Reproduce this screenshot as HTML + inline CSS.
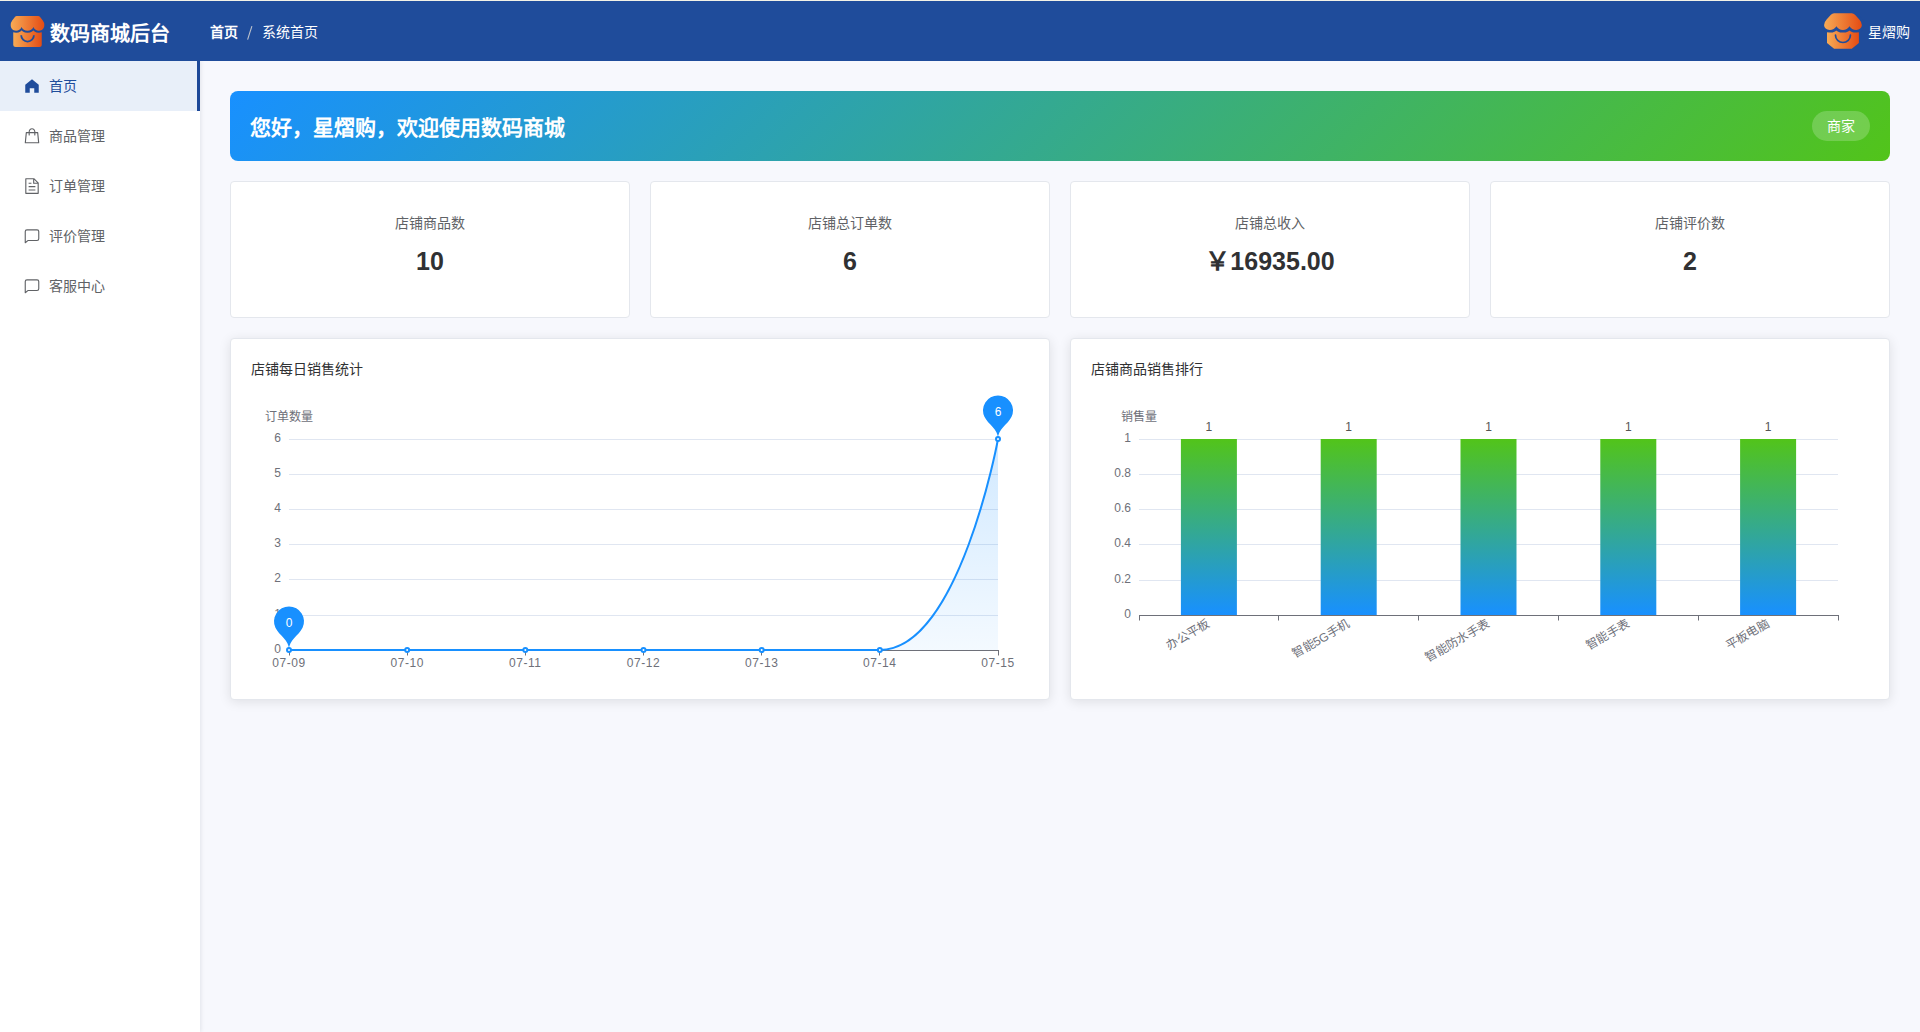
<!DOCTYPE html>
<html lang="zh-CN">
<head>
<meta charset="utf-8">
<style>
*{box-sizing:border-box;margin:0;padding:0}
html,body{width:1920px;height:1032px;overflow:hidden;background:#f7f8fd;font-family:"Liberation Sans",sans-serif}
.abs{position:absolute}
#topline{left:0;top:0;width:1920px;height:1px;background:#f3f2e6}
#header{left:0;top:1px;width:1920px;height:60px;background:#1f4c9b}
.title{left:50px;top:21px;font-size:20px;font-weight:bold;color:#fff;line-height:26px;white-space:nowrap}
.bc1{left:210px;top:22px;font-size:14px;font-weight:bold;color:#fff;line-height:20px}
.bc2{left:262px;top:22px;font-size:14px;color:#fff;line-height:20px}
.uname{left:1868px;top:22px;font-size:14px;color:#fff;line-height:20px}
#side{left:0;top:61px;width:200px;height:971px;background:#fff;box-shadow:1px 0 4px rgba(0,21,41,0.09)}
.mi{left:0;width:200px;height:50px}
.mi .tx{position:absolute;left:49px;top:15px;font-size:14px;line-height:20px;color:#606266;white-space:nowrap}
.mi.act{background:#e8eff9}
.mi.act .tx{color:#1f4c9b}
.actbar{left:197px;top:61px;width:3px;height:50px;background:#1d4898}
#banner{left:230px;top:91px;width:1660px;height:70px;border-radius:8px;background:linear-gradient(135deg,#1890ff 0%,#52c41a 100%)}
.btext{left:250px;top:114px;font-size:21px;font-weight:bold;color:#fff;line-height:28px;white-space:nowrap}
.tag{left:1812px;top:111px;width:58px;height:30px;border-radius:15px;background:rgba(255,255,255,0.2);color:#fff;font-size:14px;line-height:30px;text-align:center}
.card{top:181px;width:400px;height:137px;background:#fff;border:1px solid #e4e7ed;border-radius:4px}
.card .lb{position:absolute;left:0;right:0;top:30.5px;text-align:center;font-size:14px;line-height:20px;color:#606266}
.card .vl{position:absolute;left:0;right:0;top:63px;text-align:center;font-size:25px;font-weight:bold;line-height:32px;color:#303133}
.ccard{top:338px;width:820px;height:362px;background:#fff;border:1px solid #e4e7ed;border-radius:4px;box-shadow:0 2px 12px rgba(0,0,0,0.1)}
.ctitle{font-size:14px;line-height:20px;color:#303133;white-space:nowrap}
svg text{font-family:"Liberation Sans",sans-serif}
</style>
</head>
<body>
<div id="side" class="abs"></div>
<div id="topline" class="abs"></div>
<div id="header" class="abs"></div>

<svg class="abs" style="left:0;top:0" width="60" height="61" viewBox="0 0 60 61">
<defs><linearGradient id="lg1" x1="0" y1="0" x2="1" y2="0"><stop offset="0" stop-color="#f7ab55"/><stop offset="1" stop-color="#e44c14"/></linearGradient></defs>
<g id="logo">
<rect x="13.25" y="28.5" width="28.5" height="18.4" rx="2.5" fill="url(#lg1)"/>
<path d="M16.9,16.0 H38.1 Q39.4,16.0 40.1,17.0 L42.8,20.6 Q44.3,22.6 44.3,25.1 C44.3,28.3 42.4,30.8 38.9,30.8 C36.5,30.8 34.6,29.6 33.4,27.0 C32.2,29.6 30.3,30.8 27.5,30.8 C24.7,30.8 22.8,29.6 21.6,27.0 C20.4,29.6 18.5,30.8 16.1,30.8 C12.6,30.8 10.7,28.3 10.7,25.1 Q10.7,22.6 12.2,20.6 L14.9,17.0 Q15.6,16.0 16.9,16.0 Z" fill="url(#lg1)" stroke="#1f4c9b" stroke-width="4.0" paint-order="stroke"/>
<path d="M21.2,35.2 A6.35,6.35 0 0 0 33.9,35.2" fill="none" stroke="#1f4c9b" stroke-width="1.8"/>
</g>
</svg>
<div class="abs title">数码商城后台</div>
<div class="abs bc1">首页</div>
<svg class="abs" style="left:240px;top:20px" width="20" height="25" viewBox="240 20 20 25"><line x1="247.6" y1="39.6" x2="251.9" y2="26.2" stroke="#c0c4cc" stroke-width="1.1"/></svg>
<div class="abs bc2">系统首页</div>

<svg class="abs" style="left:1810px;top:0" width="60" height="61" viewBox="1810 0 60 61">
<defs><linearGradient id="lg2" x1="0" y1="0" x2="1" y2="0"><stop offset="0" stop-color="#f7ab55"/><stop offset="1" stop-color="#e44c14"/></linearGradient></defs>
<path d="M1827,27 H1858.9 V42.9 L1851.8,48.7 H1834.1 L1827,42.9 Z" fill="url(#lg2)"/>
<path d="M1834.1,13.3 H1851.8 Q1853.6,13.3 1855.0,14.8 L1859.3,19.6 Q1861.8,22.3 1861.8,25.1 C1861.8,28.0 1859.4,29.9 1856.2,29.9 C1853.2,29.9 1850.9,28.7 1849.5,26.3 C1848.1,28.7 1845.8,29.9 1842.95,29.9 C1840.1,29.9 1837.8,28.7 1836.4,26.3 C1835.0,28.7 1832.7,29.9 1829.7,29.9 C1826.5,29.9 1824.1,28.0 1824.1,25.1 Q1824.1,22.3 1826.6,19.6 L1830.9,14.8 Q1832.3,13.3 1834.1,13.3 Z" fill="url(#lg2)" stroke="#1f4c9b" stroke-width="5.4" paint-order="stroke"/>
<path d="M1835.5,35.2 A7.45,7.3 0 0 0 1850.4,35.2" fill="none" stroke="#1f4c9b" stroke-width="1.7" stroke-linecap="round"/>
</svg>
<div class="abs uname">星熠购</div>

<div class="abs mi act" style="top:61px;width:197px">
 <div class="tx">首页</div>
</div>
<div class="abs actbar"></div>
<div class="abs mi" style="top:111px">
 <div class="tx">商品管理</div>
</div>
<div class="abs mi" style="top:161px">
 <div class="tx">订单管理</div>
</div>
<div class="abs mi" style="top:211px">
 <div class="tx">评价管理</div>
</div>
<div class="abs mi" style="top:261px">
 <div class="tx">客服中心</div>
</div>

<svg class="abs" style="left:0;top:0" width="200" height="300" viewBox="0 0 200 300">
<g transform="translate(23,77) scale(0.017578125)"><path fill="#1f4c9b" d="M512 128 128 447.936V896h255.936V640H640v256h255.936V447.936z"/></g>
<g transform="translate(23,127) scale(0.017578125)"><path fill="#606266" d="M320 288v-22.336C320 154.688 405.504 64 512 64s192 90.688 192 201.664v22.4h131.072a32 32 0 0 1 31.808 28.8l57.6 576a32 32 0 0 1-31.808 35.2H131.328a32 32 0 0 1-31.808-35.2l57.6-576a32 32 0 0 1 31.808-28.8H320zm64 0h256v-22.336C640 189.248 582.272 128 512 128c-70.272 0-128 61.248-128 137.664v22.4zm-64 64H217.92l-51.2 512h690.560l-51.264-512H704v96a32 32 0 1 1-64 0v-96H384v96a32 32 0 0 1-64 0z"/></g>
<g transform="translate(23,177) scale(0.017578125)"><path fill="#606266" d="M832 384H576V128H192v768h640zm-26.496-64L640 154.496V320zM160 64h480l256 256v608a32 32 0 0 1-32 32H160a32 32 0 0 1-32-32V96a32 32 0 0 1 32-32m160 448h384v64H320zm0-192h160v64H320zm0 384h384v64H320z"/></g>
<g transform="translate(23,227) scale(0.017578125)"><path fill="#606266" d="M273.536 736H800a64 64 0 0 0 64-64V256a64 64 0 0 0-64-64H224a64 64 0 0 0-64 64v570.88zM296 800 147.968 918.4A32 32 0 0 1 96 893.44V256a128 128 0 0 1 128-128h576a128 128 0 0 1 128 128v416a128 128 0 0 1-128 128z"/></g>
<g transform="translate(23,277) scale(0.017578125)"><path fill="#606266" d="M273.536 736H800a64 64 0 0 0 64-64V256a64 64 0 0 0-64-64H224a64 64 0 0 0-64 64v570.88zM296 800 147.968 918.4A32 32 0 0 1 96 893.44V256a128 128 0 0 1 128-128h576a128 128 0 0 1 128 128v416a128 128 0 0 1-128 128z"/></g>
</svg>
<div id="banner" class="abs"></div>
<div class="abs btext">您好，星熠购，欢迎使用数码商城</div>
<div class="abs tag">商家</div>

<div class="abs card" style="left:230px"><div class="lb">店铺商品数</div><div class="vl">10</div></div>
<div class="abs card" style="left:650px"><div class="lb">店铺总订单数</div><div class="vl">6</div></div>
<div class="abs card" style="left:1070px"><div class="lb">店铺总收入</div><div class="vl">￥16935.00</div></div>
<div class="abs card" style="left:1490px"><div class="lb">店铺评价数</div><div class="vl">2</div></div>

<div class="abs ccard" style="left:230px"></div>
<div class="abs ccard" style="left:1070px"></div>
<div class="abs ctitle" style="left:251px;top:359px">店铺每日销售统计</div>
<div class="abs ctitle" style="left:1091px;top:359px">店铺商品销售排行</div>

<!--CHART-->
<svg class="abs" style="left:0;top:0" width="1920" height="1032" viewBox="0 0 1920 1032">
<line x1="289.0" y1="439.5" x2="998.0" y2="439.5" stroke="#e0e6f1" stroke-width="1"/>
<line x1="289.0" y1="474.5" x2="998.0" y2="474.5" stroke="#e0e6f1" stroke-width="1"/>
<line x1="289.0" y1="509.5" x2="998.0" y2="509.5" stroke="#e0e6f1" stroke-width="1"/>
<line x1="289.0" y1="544.5" x2="998.0" y2="544.5" stroke="#e0e6f1" stroke-width="1"/>
<line x1="289.0" y1="579.5" x2="998.0" y2="579.5" stroke="#e0e6f1" stroke-width="1"/>
<line x1="289.0" y1="615.5" x2="998.0" y2="615.5" stroke="#e0e6f1" stroke-width="1"/>
<text x="281" y="441.7" text-anchor="end" font-size="12" fill="#6e7079">6</text>
<text x="281" y="476.9" text-anchor="end" font-size="12" fill="#6e7079">5</text>
<text x="281" y="512.0" text-anchor="end" font-size="12" fill="#6e7079">4</text>
<text x="281" y="547.2" text-anchor="end" font-size="12" fill="#6e7079">3</text>
<text x="281" y="582.4" text-anchor="end" font-size="12" fill="#6e7079">2</text>
<text x="281" y="617.5" text-anchor="end" font-size="12" fill="#6e7079">1</text>
<text x="281" y="652.7" text-anchor="end" font-size="12" fill="#6e7079">0</text>
<text x="289" y="421" text-anchor="middle" font-size="12" fill="#6e7079">订单数量</text>
<defs><linearGradient id="ag" x1="0" y1="0" x2="0" y2="1"><stop offset="0" stop-color="#1890ff" stop-opacity="0.2"/><stop offset="1" stop-color="#1890ff" stop-opacity="0.05"/></linearGradient><linearGradient id="bg" x1="0" y1="0" x2="0" y2="1"><stop offset="0" stop-color="#52c41a"/><stop offset="1" stop-color="#1890ff"/></linearGradient></defs>
<path d="M879.83,650.00 C959.21,650.00 998.00,439.00 998.00,439.00 L998.00,650.0 Z" fill="url(#ag)"/>
<line x1="289.0" y1="650.5" x2="998.5" y2="650.5" stroke="#6e7079" stroke-width="1"/>
<line x1="289.5" y1="650" x2="289.5" y2="655.5" stroke="#6e7079" stroke-width="1"/>
<line x1="407.5" y1="650" x2="407.5" y2="655.5" stroke="#6e7079" stroke-width="1"/>
<line x1="525.5" y1="650" x2="525.5" y2="655.5" stroke="#6e7079" stroke-width="1"/>
<line x1="643.5" y1="650" x2="643.5" y2="655.5" stroke="#6e7079" stroke-width="1"/>
<line x1="761.5" y1="650" x2="761.5" y2="655.5" stroke="#6e7079" stroke-width="1"/>
<line x1="879.5" y1="650" x2="879.5" y2="655.5" stroke="#6e7079" stroke-width="1"/>
<line x1="998.5" y1="650" x2="998.5" y2="655.5" stroke="#6e7079" stroke-width="1"/>
<text x="289.0" y="667" text-anchor="middle" font-size="12" letter-spacing="0.55" fill="#6e7079">07-09</text>
<text x="407.2" y="667" text-anchor="middle" font-size="12" letter-spacing="0.55" fill="#6e7079">07-10</text>
<text x="525.3" y="667" text-anchor="middle" font-size="12" letter-spacing="0.55" fill="#6e7079">07-11</text>
<text x="643.5" y="667" text-anchor="middle" font-size="12" letter-spacing="0.55" fill="#6e7079">07-12</text>
<text x="761.7" y="667" text-anchor="middle" font-size="12" letter-spacing="0.55" fill="#6e7079">07-13</text>
<text x="879.8" y="667" text-anchor="middle" font-size="12" letter-spacing="0.55" fill="#6e7079">07-14</text>
<text x="998.0" y="667" text-anchor="middle" font-size="12" letter-spacing="0.55" fill="#6e7079">07-15</text>
<path d="M289.00,650.00 L879.83,650.00 C959.21,650.00 998.00,439.00 998.00,439.00" fill="none" stroke="#1890ff" stroke-width="2" stroke-linejoin="bevel"/>
<circle cx="289.00" cy="650.00" r="2" fill="#fff" stroke="#1890ff" stroke-width="2"/>
<circle cx="407.17" cy="650.00" r="2" fill="#fff" stroke="#1890ff" stroke-width="2"/>
<circle cx="525.33" cy="650.00" r="2" fill="#fff" stroke="#1890ff" stroke-width="2"/>
<circle cx="643.50" cy="650.00" r="2" fill="#fff" stroke="#1890ff" stroke-width="2"/>
<circle cx="761.67" cy="650.00" r="2" fill="#fff" stroke="#1890ff" stroke-width="2"/>
<circle cx="879.83" cy="650.00" r="2" fill="#fff" stroke="#1890ff" stroke-width="2"/>
<circle cx="998.00" cy="439.00" r="2" fill="#fff" stroke="#1890ff" stroke-width="2"/>
<path d="M275.447,627.857 A15,15 0 1 1 302.553,627.857 C298.695,635.989 289.000,639.500 289.000,650.000 C289.000,639.500 279.305,635.989 275.447,627.857Z" fill="#1890ff"/>
<text x="289.0" y="627.3" text-anchor="middle" font-size="12" fill="#fff">0</text>
<path d="M984.447,416.857 A15,15 0 1 1 1011.553,416.857 C1007.695,424.989 998.000,428.500 998.000,439.000 C998.000,428.500 988.305,424.989 984.447,416.857Z" fill="#1890ff"/>
<text x="998.0" y="416.3" text-anchor="middle" font-size="12" fill="#fff">6</text>
<line x1="1139.0" y1="439.5" x2="1838.0" y2="439.5" stroke="#e0e6f1" stroke-width="1"/>
<line x1="1139.0" y1="474.5" x2="1838.0" y2="474.5" stroke="#e0e6f1" stroke-width="1"/>
<line x1="1139.0" y1="509.5" x2="1838.0" y2="509.5" stroke="#e0e6f1" stroke-width="1"/>
<line x1="1139.0" y1="544.5" x2="1838.0" y2="544.5" stroke="#e0e6f1" stroke-width="1"/>
<line x1="1139.0" y1="580.5" x2="1838.0" y2="580.5" stroke="#e0e6f1" stroke-width="1"/>
<text x="1131" y="441.7" text-anchor="end" font-size="12" fill="#6e7079">1</text>
<text x="1131" y="476.9" text-anchor="end" font-size="12" fill="#6e7079">0.8</text>
<text x="1131" y="512.1" text-anchor="end" font-size="12" fill="#6e7079">0.6</text>
<text x="1131" y="547.3" text-anchor="end" font-size="12" fill="#6e7079">0.4</text>
<text x="1131" y="582.5" text-anchor="end" font-size="12" fill="#6e7079">0.2</text>
<text x="1131" y="617.7" text-anchor="end" font-size="12" fill="#6e7079">0</text>
<text x="1139" y="421" text-anchor="middle" font-size="12" fill="#6e7079">销售量</text>
<rect x="1180.90" y="439.0" width="56" height="176.0" fill="url(#bg)"/>
<text x="1208.9" y="431" text-anchor="middle" font-size="12" fill="#555">1</text>
<text x="1208.9" y="623.0" text-anchor="end" dominant-baseline="central" font-size="12" fill="#6e7079" transform="rotate(-30 1208.9 623.0)">办公平板</text>
<rect x="1320.70" y="439.0" width="56" height="176.0" fill="url(#bg)"/>
<text x="1348.7" y="431" text-anchor="middle" font-size="12" fill="#555">1</text>
<text x="1348.7" y="623.0" text-anchor="end" dominant-baseline="central" font-size="12" fill="#6e7079" transform="rotate(-30 1348.7 623.0)">智能5G手机</text>
<rect x="1460.50" y="439.0" width="56" height="176.0" fill="url(#bg)"/>
<text x="1488.5" y="431" text-anchor="middle" font-size="12" fill="#555">1</text>
<text x="1488.5" y="623.0" text-anchor="end" dominant-baseline="central" font-size="12" fill="#6e7079" transform="rotate(-30 1488.5 623.0)">智能防水手表</text>
<rect x="1600.30" y="439.0" width="56" height="176.0" fill="url(#bg)"/>
<text x="1628.3" y="431" text-anchor="middle" font-size="12" fill="#555">1</text>
<text x="1628.3" y="623.0" text-anchor="end" dominant-baseline="central" font-size="12" fill="#6e7079" transform="rotate(-30 1628.3 623.0)">智能手表</text>
<rect x="1740.10" y="439.0" width="56" height="176.0" fill="url(#bg)"/>
<text x="1768.1" y="431" text-anchor="middle" font-size="12" fill="#555">1</text>
<text x="1768.1" y="623.0" text-anchor="end" dominant-baseline="central" font-size="12" fill="#6e7079" transform="rotate(-30 1768.1 623.0)">平板电脑</text>
<line x1="1139.0" y1="615.5" x2="1838.5" y2="615.5" stroke="#6e7079" stroke-width="1"/>
<line x1="1139.5" y1="615" x2="1139.5" y2="620.5" stroke="#6e7079" stroke-width="1"/>
<line x1="1278.5" y1="615" x2="1278.5" y2="620.5" stroke="#6e7079" stroke-width="1"/>
<line x1="1418.5" y1="615" x2="1418.5" y2="620.5" stroke="#6e7079" stroke-width="1"/>
<line x1="1558.5" y1="615" x2="1558.5" y2="620.5" stroke="#6e7079" stroke-width="1"/>
<line x1="1698.5" y1="615" x2="1698.5" y2="620.5" stroke="#6e7079" stroke-width="1"/>
<line x1="1838.5" y1="615" x2="1838.5" y2="620.5" stroke="#6e7079" stroke-width="1"/>
</svg>
<!--/CHART-->
</body>
</html>
